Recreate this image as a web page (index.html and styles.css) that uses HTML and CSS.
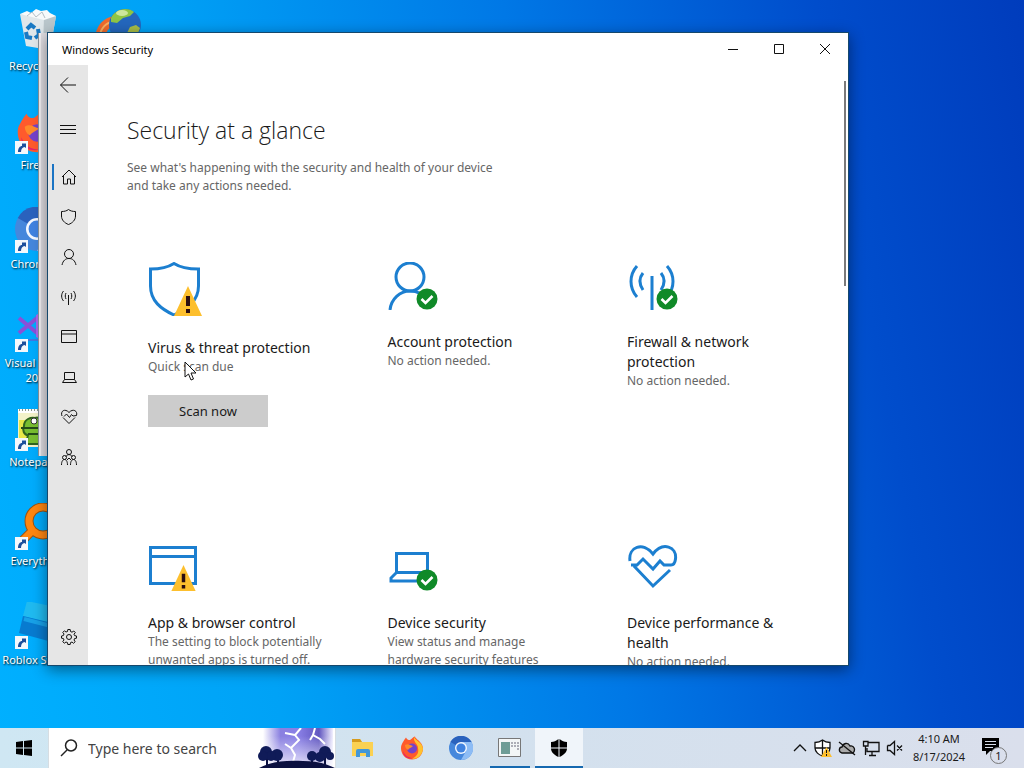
FILE: index.html
```html
<!DOCTYPE html>
<html lang="en">
<head>
    <meta charset="UTF-8">
    <meta name="viewport" content="width=device-width, initial-scale=1.0">
    <title>Windows Security</title>
    <link rel="stylesheet" href="styles.css">
</head>
<body>

    <!-- shared icons -->
    <svg class="defs" aria-hidden="true">
        <symbol id="shortcut" viewBox="0 0 13 13">
            <rect width="13" height="13" fill="#f4f8fc"/>
            <path d="M3 11C3 7 5 5 7 5V2.500h4V7L9.500 6C7.500 6.500 6 8 6 11z" fill="#1d4f9c"/>
        </symbol>
        <symbol id="warning" viewBox="0 0 28 30">
            <path d="M14 0L28 30H0z" fill="#fdbf2d"/>
            <path d="M12 10h4v10h-4zM12 23h4v4h-4z" fill="#2b0d10"/>
        </symbol>
        <symbol id="check" viewBox="0 0 22 22">
            <circle cx="11" cy="11" r="10.500" fill="#108a28"/>
            <path d="M5.500 11L9.500 15L16.500 8" fill="none" stroke="#fff" stroke-width="2.600"/>
        </symbol>
        <symbol id="firefox" viewBox="0 0 24 24">
            <path d="M3 6C4 4 5 3 6 1.500C7 3.500 8 4 10 4C12 3 13 1 15 0.500C15 3 22 5 23 12C23 19 18 23.500 12 23.500C5 23.500 1 18 1 12C1 9 2 8 3 6z" fill="#ff5a2c"/>
            <path d="M14 1C16 5 23 7 23 13C22 20 17 23 12 23C17 20 19 17 18 12C18 8 13 6 14 1z" fill="#ffc22e"/>
            <path d="M3 15C5 20 9 22 13 22C9 23.500 3 21 3 15z" fill="#e0226f"/>
            <circle cx="12" cy="12.500" r="5" fill="#7542c9"/>
            <path d="M5 9C8 7 10 9 13 10C11 12 9 12 8 14C6 13 5 11 5 9z" fill="#ff8a2a"/>
        </symbol>
        <symbol id="chromium" viewBox="0 0 24 24">
            <circle cx="12" cy="12" r="12" fill="#4587dc"/>
            <path d="M12 12L1.500 6A12 12 0 0 1 22.500 6z" fill="#2a62bd"/>
            <path d="M12 6H22.500A12 12 0 0 1 12 24L17 15z" fill="#8dbcf5"/>
            <circle cx="12" cy="12" r="6" fill="#f2f7ff"/>
            <circle cx="12" cy="12" r="4.600" fill="#3f82e0"/>
        </symbol>
    </svg>

    <main class="desktop">
        <div class="desktop-icons">
            <div class="icon-column">
                <button class="desktop-icon">
                    <svg width="48" height="48" viewBox="0 0 48 48">
                        <path d="M6 6L42 8L36 42L12 38z" fill="#dfe7ea"/>
                        <path d="M30 8L42 8L36 42L29 42z" fill="#b9c6cb"/>
                        <path d="M6 6L13 3L17 5L22 1L27 3L33 2L36 5L42 8L30 12z" fill="#f7fafb"/>
                        <path d="M13 8l5-4 4 5 6-5 3 6" fill="none" stroke="#b4bfc6"/>
                        <path d="M13 21l4-4 4 3M24 21l1 6-4 3M12 24l1 5 5 1" fill="none" stroke="#1779c4" stroke-width="4"/>
                    </svg>
                    <span>Recycle Bin</span>
                </button>
                <button class="desktop-icon">
                    <svg width="48" height="48" viewBox="0 0 48 48">
                        <use href="#firefox" x="2" y="4" width="42" height="42"/>
                        <use href="#shortcut" x="1" y="34" width="13" height="13"/>
                    </svg>
                    <span>Firefox</span>
                </button>
                <button class="desktop-icon">
                    <svg width="48" height="48" viewBox="0 0 48 48">
                        <use href="#chromium" x="1" y="1" width="44" height="44"/>
                        <use href="#shortcut" x="1" y="34" width="13" height="13"/>
                    </svg>
                    <span>Chromium</span>
                </button>
                <button class="desktop-icon">
                    <svg width="48" height="48" viewBox="0 0 48 48">
                        <path d="M5 13L23 28M5 28L23 13" stroke="#8a50d8" stroke-width="4"/>
                        <path d="M22 10v22l8 4V6z" fill="#a766e6"/>
                        <path d="M14 35h12" stroke="#3f78e0" stroke-width="2"/>
                        <use href="#shortcut" x="1" y="34" width="13" height="13"/>
                    </svg>
                    <span>Visual Studio<br>2022</span>
                </button>
                <button class="desktop-icon">
                    <svg width="48" height="48" viewBox="0 0 48 48">
                        <rect x="4" y="5" width="38" height="38" fill="#f3f2c8"/>
                        <path d="M4 5h38v4H4z" fill="#fff"/>
                        <path d="M5 6h36" stroke="#8b9a8b" stroke-dasharray="1 2" stroke-width="2"/>
                        <path d="M5 16h36v20H5z" fill="#e8e84a"/>
                        <path d="M10 22C10 15 17 13 21 14C26 12 29 18 27 24L25 40H12L14 31C10 31 8 26 10 22z" fill="#78bd30" stroke="#30651e" stroke-width="2"/>
                        <circle cx="20" cy="17" r="3" fill="#fff" stroke="#333"/>
                        <path d="M7 24h18M14 30h10" stroke="#254b19" stroke-width="2"/>
                        <use href="#shortcut" x="1" y="34" width="13" height="13"/>
                    </svg>
                    <span>Notepad++</span>
                </button>
                <button class="desktop-icon">
                    <svg width="48" height="48" viewBox="0 0 48 48">
                        <path d="M18 28L9 37" stroke="#9c5312" stroke-width="9"/>
                        <circle cx="29" cy="18" r="14" fill="none" stroke="#9c5312" stroke-width="9"/>
                        <path d="M18 28L9 37" stroke="#ff8610" stroke-width="7"/>
                        <circle cx="29" cy="18" r="14" fill="none" stroke="#ff8610" stroke-width="7"/>
                        <use href="#shortcut" x="1" y="34" width="13" height="13"/>
                    </svg>
                    <span>Everything</span>
                </button>
                <button class="desktop-icon">
                    <svg width="48" height="48" viewBox="0 0 48 48">
                        <path d="M13 -1L46 6L42 22L9 14z" fill="#20baf0"/>
                        <path d="M9 14L42 22L38 40L5 31z" fill="#087bd0"/>
                        <path d="M10 17L41 25" stroke="#18a1e8" stroke-width="4"/>
                        <use href="#shortcut" x="1" y="34" width="13" height="13"/>
                    </svg>
                    <span>Roblox Studio</span>
                </button>
            </div>
            <div class="icon-column">
                <button class="desktop-icon" aria-label="Browser">
                    <svg width="48" height="48" viewBox="0 0 48 48">
                        <path d="M1 30C3 14 12 9 22 8V18C14 19 12 23 12 30z" fill="#f06a2c"/>
                        <path d="M5 30C7 19 12 15 20 13" stroke="#f9b060" stroke-width="2" fill="none"/>
                        <circle cx="31" cy="17" r="16" fill="#2467bd"/>
                        <path d="M17 10C19 5 25 1 31 1C35 1 38 2 40 4L36 8L29 10L23 15L17 14z" fill="#8fc544"/>
                        <path d="M36 19L42 17L46 20L44 25L37 28L33 25z" fill="#a8bd45"/>
                        <ellipse cx="28" cy="5" rx="6" ry="3" fill="#e5f3c2" opacity=".7"/>
                    </svg>
                </button>
            </div>
        </div>

        <div class="back-window"></div>

        <section class="window">
            <header class="titlebar">
                <span class="window-title">Windows Security</span>
                <button class="window-button" aria-label="Minimize">
                    <svg width="12" height="12"><path d="M1 6.500h10"/></svg>
                </button>
                <button class="window-button" aria-label="Maximize">
                    <svg width="12" height="12"><path d="M1.500 1.500h9v9h-9z"/></svg>
                </button>
                <button class="window-button" aria-label="Close">
                    <svg width="12" height="12"><path d="M1 1L11 11M11 1L1 11"/></svg>
                </button>
            </header>

            <div class="window-body">
                <nav class="sidebar">
                    <button class="nav-item" aria-label="Back">
                        <svg width="18" height="18"><path d="M1.500 9H17M9 1.500L1.500 9L9 16.500"/></svg>
                    </button>
                    <button class="nav-item menu" aria-label="Menu">
                        <svg width="18" height="18"><path d="M1 4.500h16M1 8.500h16M1 12.500h16"/></svg>
                    </button>
                    <button class="nav-item page selected" aria-label="Home">
                        <svg width="18" height="18"><path d="M2 9L9 2L16 9M3.500 7.500V16h4v-5h3v5h4V7.500"/></svg>
                    </button>
                    <button class="nav-item page" aria-label="Virus &amp; threat protection">
                        <svg width="18" height="18"><path d="M8.500 1.500C10.500 3 12.500 3.500 15.500 3.500V8C15.500 12 12.500 15 8.500 16.500C4.500 15 1.500 12 1.500 8V3.500C4.500 3.500 6.500 3 8.500 1.500z"/></svg>
                    </button>
                    <button class="nav-item page" aria-label="Account protection">
                        <svg width="18" height="18"><circle cx="9" cy="6" r="4.500"/><path d="M2 17C3 12.500 5.500 10.500 9 10.500S15 12.500 16 17"/></svg>
                    </button>
                    <button class="nav-item page" aria-label="Firewall &amp; network protection">
                        <svg width="18" height="18"><path d="M8.500 7v10M6 5C5 7 5 9 6 11M11 5C12 7 12 9 11 11M3.500 3C1 6 1 10 3.500 13M13.500 3C16 6 16 10 13.500 13"/></svg>
                    </button>
                    <button class="nav-item page" aria-label="App &amp; browser control">
                        <svg width="18" height="18"><path d="M1.500 2.500h15v12h-15zM1.500 6h15"/></svg>
                    </button>
                    <button class="nav-item page" aria-label="Device security">
                        <svg width="18" height="18"><path d="M4.500 4.500h10v7h-10zM4.500 11.500L2.500 14.500H16.500L14.500 11.500"/></svg>
                    </button>
                    <button class="nav-item page" aria-label="Device performance &amp; health">
                        <svg width="18" height="18"><path d="M2 8C0 3 5 0 9 4.500C13 0 18 3 16.500 7.500L13 8L11.500 6.500L9.500 9.500L6.500 6L4 8.500M3 9.500L9 15.500L15 9.500"/></svg>
                    </button>
                    <button class="nav-item page" aria-label="Family options">
                        <svg width="18" height="18"><circle cx="9" cy="4" r="2.500"/><circle cx="4.500" cy="9.500" r="2"/><circle cx="13.500" cy="9.500" r="2"/><path d="M1.500 17C1.500 13 3 11.500 4.500 11.500S7.500 13 7.500 17M10.500 17C10.500 13 12 11.500 13.500 11.500S16.500 13 16.500 17M6 8.500C7 6 11 6 12 8.500M7 12L9 10L11 12"/></svg>
                    </button>
                    <button class="nav-item page settings" aria-label="Settings">
                        <svg width="18" height="18"><circle cx="9" cy="9" r="2.500"/><path d="M7.500 3.500L7.800 1.500H10.200L10.500 3.500L12 4.200L13.800 3L15.300 4.600L14 6.200L14.600 7.600L16.500 8V10.200L14.600 10.500L14 12L15.200 13.700L13.500 15.300L12 14L10.500 14.600L10.200 16.500H7.800L7.500 14.600L6 14L4.300 15.200L2.700 13.600L4 12L3.400 10.500L1.500 10.200V8L3.400 7.500L4 6L2.800 4.400L4.400 2.800L6 4z"/></svg>
                    </button>
                </nav>

                <div class="content">
                    <h1>Security at a glance</h1>
                    <p class="intro">See what's happening with the security and health of your device and take any actions needed.</p>

                    <div class="cards">
                        <article class="card">
                            <svg class="card-icon" width="56" height="54">
                                <path d="M26 1.500C33 6 42 7 50.500 7V24C50.500 39 39 47 26 53C13 47 2.500 39 2.500 24V7C11 7 19 6 26 1.500z"/>
                                <use href="#warning" x="26" y="24" width="28" height="30"/>
                            </svg>
                            <h2>Virus &amp; threat protection</h2>
                            <p>Quick scan due</p>
                            <button class="scan-button">Scan now</button>
                        </article>
                        <article class="card">
                            <svg class="card-icon" width="52" height="48">
                                <circle cx="22" cy="15" r="14"/>
                                <path d="M2 48C3 37 12 29 22 29C29 29 35 32 38 38"/>
                                <use href="#check" x="28" y="26" width="22" height="22"/>
                            </svg>
                            <h2>Account protection</h2>
                            <p>No action needed.</p>
                        </article>
                        <article class="card">
                            <svg class="card-icon" width="52" height="48">
                                <path d="M25 14V48M16 11C12 16 12 22 16 28M34 11C38 16 38 22 34 28M10 4C2 13 2 26 10 35M40 4C48 13 48 26 40 35"/>
                                <use href="#check" x="29" y="26" width="22" height="22"/>
                            </svg>
                            <h2>Firewall &amp; network protection</h2>
                            <p>No action needed.</p>
                        </article>
                        <article class="card">
                            <svg class="card-icon" width="52" height="48">
                                <path d="M2.500 4.500h45v36h-45zM2.500 13.500h45"/>
                                <use href="#warning" x="22" y="22" width="27" height="26"/>
                            </svg>
                            <h2>App &amp; browser control</h2>
                            <p>The setting to block potentially unwanted apps is turned off.</p>
                        </article>
                        <article class="card">
                            <svg class="card-icon" width="52" height="48">
                                <path d="M8.500 10.500h31v19h-31zM8.500 29.500L3 35V38H33"/>
                                <use href="#check" x="28" y="26" width="22" height="22"/>
                            </svg>
                            <h2>Device security</h2>
                            <p>View status and manage hardware security features</p>
                        </article>
                        <article class="card">
                            <svg class="card-icon" width="52" height="48">
                                <path d="M3 18C1 4 16 -2 26 11C36 -2 50 4 48.500 16C48 20 46 22 44 22H37L33 18L26 26L16 16L10 22H4M7 23L26 43L43 27"/>
                            </svg>
                            <h2>Device performance &amp; health</h2>
                            <p>No action needed.</p>
                        </article>
                    </div>
                </div>
            </div>
            <div class="scroll-thumb"></div>
        </section>

        <svg class="cursor" width="14" height="20"><path d="M1 1V16L4.500 13L7 19L9.500 18L7 12H12z" fill="#fff" stroke="#111"/></svg>
    </main>

    <footer class="taskbar">
        <button class="start" aria-label="Start">
            <svg width="16" height="16"><path d="M0 2L7 1V7.500H0zM8 1L16 0V7.500H8zM0 8.500H7V15L0 14zM8 8.500H16V16L8 15z"/></svg>
        </button>
        <div class="search">
            <svg width="18" height="18"><circle cx="11" cy="6.500" r="5.500"/><path d="M7 11L1 17"/></svg>
            <input type="text" placeholder="Type here to search" aria-label="Search">
            <svg class="storm" width="80" height="40">
                <defs>
                    <linearGradient id="sky">
                        <stop offset="0" stop-color="#fff"/>
                        <stop offset=".25" stop-color="#8a80e0"/>
                        <stop offset=".5" stop-color="#8a80e6"/>
                        <stop offset=".8" stop-color="#6258c0"/>
                        <stop offset="1" stop-color="#f2f0ff"/>
                    </linearGradient>
                    <linearGradient id="fade" x2="0" y2="1">
                        <stop offset=".2" stop-color="#fff" stop-opacity="0"/>
                        <stop offset="1" stop-color="#fff" stop-opacity=".8"/>
                    </linearGradient>
                </defs>
                <rect x="8" width="70" height="40" fill="url(#sky)"/>
                <rect x="8" width="70" height="40" fill="url(#fade)"/>
                <path d="M46 0L40 7L44 12L36 20L40 27L38 34M40 7L30 5M36 20L30 16M60 0L58 7L65 11L70 16M58 7L55 12" fill="none" stroke="#fff" stroke-width="2"/>
                <path d="M4 40C16 34 28 32 48 33C62 33 72 36 80 40z" fill="#0b1040"/>
                <path d="M12 26v12M70 26v12M57 30v8M23 30v6" stroke="#0b1040" stroke-width="2"/>
                <g fill="#101b58">
                    <circle cx="11" cy="24" r="6"/><circle cx="22" cy="27" r="6"/><circle cx="16" cy="28" r="5"/><circle cx="8" cy="28" r="5"/>
                    <circle cx="70" cy="24" r="6"/><circle cx="57" cy="28" r="5"/><circle cx="65" cy="29" r="5"/><circle cx="75" cy="28" r="4"/>
                </g>
            </svg>
        </div>
        <div class="tasks">
            <button class="task" aria-label="File Explorer">
                <svg width="24" height="24">
                    <path d="M1 3h8l2 3h11v14H1z" fill="#fbd152"/><path d="M1 3h8l2 3H1z" fill="#d69b1d"/>
                    <path d="M5 21v-6q0-2 2-2h10q2 0 2 2v6h-4v-4H9v4z" fill="#4297d8"/>
                </svg>
            </button>
            <button class="task" aria-label="Firefox"><svg width="24" height="24"><use href="#firefox"/></svg></button>
            <button class="task" aria-label="Chromium"><svg width="24" height="24"><use href="#chromium"/></svg></button>
            <button class="task open" aria-label="Program">
                <svg width="24" height="20">
                    <path d="M.5.5h22v18H.5z" fill="#f3f6f6" stroke="#777"/>
                    <path d="M3 4h9v12H3z" fill="#6f9d96"/><path d="M14 4v6M17 4v5M20 4v8" stroke="#667" stroke-dasharray="2 1"/>
                </svg>
            </button>
            <button class="task open current" aria-label="Windows Security">
                <svg width="18" height="18"><path d="M8.500 0V8.500H1V3C4 3 6 2 8.500 0zM9.500 0C12 2 14 3 17 3V8.500H9.500zM1 9.500H8.500V18C4 16 1 13 1 9.500zM9.500 9.500H17C17 13 14 16 9.500 18z"/></svg>
            </button>
        </div>
        <div class="tray">
            <svg width="16" height="16"><path d="M2 11L8 5L14 11"/></svg>
            <svg width="18" height="18">
                <path d="M8.500 1C11 3 13 3.500 16 3.500V9C16 13 12 16 8.500 17C5 16 1 13 1 9V3.500C4 3.500 6 3 8.500 1zM8.500 1V17M1 9H16" fill="#fff"/>
                <path d="M12.500 8L18 18H7z" fill="#fdbf2d" stroke="none"/><path d="M12.500 11v3M12.500 15v2" stroke-width="1"/>
            </svg>
            <svg width="18" height="18"><path d="M4 14C0 13 1 8 4 8C5 4 10 3 12 7C16 6 18 11 15 14z" fill="#aaa"/><path d="M1 3L17 16"/></svg>
            <svg width="18" height="18"><path d="M6 3.500H17V12.500H5V9M10 12.500V16M7 16.500H14M1.500 2.500H6V7H1.500zM3.500 7V16"/></svg>
            <svg width="18" height="18"><path d="M1.500 6.500H4L8.500 2.500V15.500L4 11.500H1.500V6.500M11 6.500L16 11.500M16 6.500L11 11.500"/></svg>
        </div>
        <div class="clock">4:10 AM<br>8/17/2024</div>
        <button class="notifications" aria-label="Notifications">
            <svg width="18" height="18"><path d="M0 1H17V14H8L4 18V14H0z"/><path d="M3 4.500H14M3 7.500H14M3 10.500H11" stroke="#d8deea"/></svg>
            <span class="count">1</span>
        </button>
    </footer>

</body>
</html>
```
FILE: styles.css
```css
* {
    box-sizing: border-box;
}

body {
    margin: 0;
    height: 100vh;
    display: flex;
    flex-direction: column;
    overflow: hidden;
    font-family: "Noto Sans", "Open Sans", sans-serif;
    font-size: 12px;
    color: #1a1a1a;
    background: linear-gradient(80deg, #00b0ff 0%, #00a2f6 25%, #0078e6 55%, #004dcc 82%, #003cbc 100%);
}

button {
    padding: 0;
    border: none;
    background: none;
    font: inherit;
    color: inherit;
}

h1, h2, p {
    margin: 0;
    font-weight: 400;
}

.defs {
    position: absolute;
    width: 0;
    height: 0;
}

.desktop {
    position: relative;
    flex: 1;
    min-height: 0;
}

/* desktop icons */
.desktop-icons {
    display: flex;
    gap: 4px;
}

.icon-column {
    display: flex;
    flex-direction: column;
}

.desktop-icon {
    display: flex;
    flex-direction: column;
    align-items: center;
    gap: 2px;
    width: 76px;
    height: 99px;
    padding-top: 8px;
    font-size: 11px;
    line-height: 15px;
    color: #fff;
    white-space: nowrap;
    text-shadow: 1px 1px 2px #000;
}

.desktop-icon svg {
    flex: none;
}

/* windows */
.back-window {
    position: absolute;
    left: 38px;
    right: 190px;
    top: 33px;
    bottom: 272px;
    background: #dfdde2;
    border-left: 1px solid #8a949c;
    box-shadow: inset 2px 0 #f4f2f4;
}

.window {
    position: absolute;
    left: 47px;
    right: 175px;
    top: 32px;
    bottom: 62px;
    display: flex;
    flex-direction: column;
    background: #fff;
    border: 1px solid #16486c;
    box-shadow: 0 4px 14px rgba(0, 0, 0, 0.45);
}

.titlebar {
    display: flex;
    align-items: center;
    height: 32px;
    flex: none;
    padding-left: 14px;
    font-size: 11px;
    color: #000;
}

.window-title {
    flex: 1;
}

.window-button {
    width: 46px;
    height: 32px;
}

.window-button svg,
.nav-item svg {
    display: block;
    margin: 0 auto;
    fill: none;
    stroke: #111;
}

.window-body {
    display: flex;
    flex: 1;
    min-height: 0;
}

.sidebar {
    display: flex;
    flex-direction: column;
    flex: none;
    width: 40px;
    padding-bottom: 8px;
    background: #e6e6e6;
}

.nav-item {
    height: 40px;
    flex: none;
}

.nav-item.menu {
    margin: 5px 0 7px;
}

.nav-item.page {
    padding-left: 2px;
}

.nav-item.selected {
    background: linear-gradient(#1a74c4, #1a74c4) 4px center / 2px 26px no-repeat;
}

.nav-item.settings {
    margin-top: auto;
}

.content {
    flex: 1;
    min-width: 0;
    padding: 49px 0 0 39px;
    overflow: hidden;
}

h1 {
    font-family: "Open Sans", "Noto Sans", sans-serif;
    font-size: 23px;
    font-weight: 300;
    line-height: 32px;
}

.intro {
    max-width: 380px;
    margin-top: 13px;
    line-height: 18px;
    color: #666;
}

.cards {
    display: grid;
    grid-template-columns: 1fr 1fr 221px;
    grid-auto-rows: 281px;
    padding: 67px 0 0 21px;
}

.card-icon {
    display: block;
    margin-bottom: 22px;
    fill: none;
    stroke: #1c7fd0;
    stroke-width: 3px;
}

.card-icon use {
    stroke: none;
}

.card h2 {
    max-width: 180px;
    font-size: 14px;
    line-height: 20px;
}

.card p {
    max-width: 190px;
    line-height: 18px;
    color: #666;
}

.scan-button {
    width: 120px;
    height: 32px;
    margin-top: 19px;
    font-size: 13px;
    background: #ccc;
}

.scroll-thumb {
    position: absolute;
    right: 2px;
    top: 48px;
    width: 2px;
    height: 205px;
    background: #7a7a7a;
}

.cursor {
    position: absolute;
    left: 184px;
    top: 361px;
}

/* taskbar */
.taskbar {
    display: flex;
    flex: none;
    height: 40px;
    background: linear-gradient(90deg, #cfe7f3, #d3e1ee 50%, #dadfec);
}

.start {
    width: 48px;
}

.start svg {
    display: block;
    margin: 0 auto;
}

.search {
    display: flex;
    align-items: center;
    width: 288px;
    padding-left: 11px;
    background: #fff;
    border: 1px solid #d6dde2;
    border-width: 0 1px;
}

.search > svg {
    flex: none;
    fill: none;
    stroke: #222;
    stroke-width: 1.5px;
}

.search .storm {
    fill: initial;
    stroke: none;
}

.search input {
    flex: 1;
    min-width: 0;
    padding: 0 0 0 10px;
    border: none;
    outline: none;
    font: inherit;
    font-size: 14px;
}

.search input::placeholder {
    color: #444;
    opacity: 1;
}

.tasks {
    display: flex;
    gap: 1px;
    padding-left: 3px;
}

.task {
    display: flex;
    align-items: center;
    justify-content: center;
    width: 48px;
}

.task.open {
    background: linear-gradient(#1669b0, #1669b0) center bottom / 40px 2px no-repeat;
}

.task.current {
    background: linear-gradient(#1669b0, #1669b0) center bottom / 48px 2px no-repeat #f0f5fa;
}

.tray {
    display: flex;
    align-items: center;
    gap: 6px;
    margin-left: auto;
}

.tray svg {
    fill: none;
    stroke: #111;
    stroke-width: 1.3px;
}

.clock {
    width: 70px;
    font-size: 11px;
    line-height: 18px;
    padding-top: 2px;
    text-align: center;
}

.notifications {
    position: relative;
    width: 34px;
    margin-right: 16px;
}

.count {
    position: absolute;
    left: 16px;
    top: 19px;
    width: 17px;
    height: 17px;
    border: 1px solid #777;
    border-radius: 50%;
    background: #dadfec;
    font-size: 11px;
    line-height: 15px;
}
```
